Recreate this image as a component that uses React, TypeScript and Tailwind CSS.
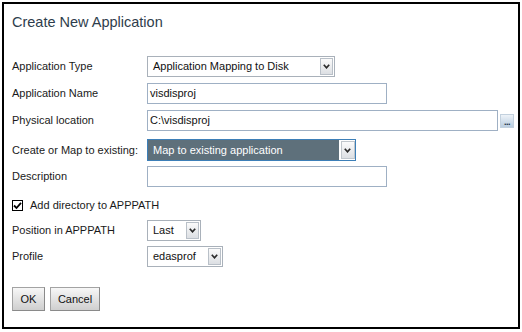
import React from "react";

const Chevron = () => (
  <svg width="7" height="5" viewBox="0 0 7 5">
    <path d="M0.8 0.8 L3.5 3.8 L6.2 0.8" fill="none" stroke="#2b2b2b" strokeWidth="1.7" />
  </svg>
);

const ArrowBox = ({ h = 17 }: { h?: number }) => (
  <div
    className="ml-auto mr-[1px] w-[13px] flex items-center justify-center border border-[#b9c0c8] bg-gradient-to-b from-[#fbfbfb] to-[#dcdfe3]"
    style={{ height: h }}
  >
    <Chevron />
  </div>
);

const Select = ({ w, text }: { w: number; text: string }) => (
  <div
    className="h-[21px] flex items-center border border-[#a9b1ba] bg-white"
    style={{ width: w }}
  >
    <span className="pl-[5px] text-[11px] text-[#111] whitespace-nowrap">{text}</span>
    <ArrowBox />
  </div>
);

const Input = ({ w, text }: { w: number; text?: string }) => (
  <div
    className="h-[21px] flex items-center border border-[#9fb0c4] bg-white"
    style={{ width: w }}
  >
    <span className="pl-[2px] text-[11px] text-[#111]">{text}</span>
  </div>
);

const Label = ({ children }: { children: React.ReactNode }) => (
  <div className="w-[135px] text-[11px] text-[#1a1a1a] whitespace-nowrap">{children}</div>
);

export default function App() {
  return (
    <div
      className="w-[522px] h-[332px] bg-white pt-[2px] pl-[2px]"
      style={{ fontFamily: '"Liberation Sans", Arial, sans-serif' }}
    >
      <div className="w-[518px] h-[327px] border-2 border-black flex flex-col pl-[8px]">
        <div className="mt-[9px] text-[14.5px] leading-[18px] text-[#2e3d4c]">Create New Application</div>

        <div className="mt-[25px] h-[21px] flex items-center">
          <Label>Application Type</Label>
          <Select w={188} text="Application Mapping to Disk" />
        </div>

        <div className="mt-[6px] h-[21px] flex items-center">
          <Label>Application Name</Label>
          <Input w={240} text="visdisproj" />
        </div>

        <div className="mt-[6px] h-[21px] flex items-center">
          <Label>Physical location</Label>
          <Input w={351} text="C:\visdisproj" />
          <div className="ml-[2px] w-[14px] h-[14px] border border-[#c3d1de] bg-gradient-to-b from-[#eef3f8] to-[#b9cde0] flex items-end justify-center">
            <span className="text-[9px] leading-[9px] text-[#1e2e44] font-bold tracking-[-0.5px]">...</span>
          </div>
        </div>

        <div className="mt-[8px] h-[22px] flex items-center">
          <Label>Create or Map to existing:</Label>
          <div className="w-[209px] h-[22px] flex items-center border border-[#3c7fb8] bg-[#5e707b]">
            <span className="pl-[5px] text-[11px] text-white whitespace-nowrap">Map to existing application</span>
            <div className="ml-auto h-full w-[16px] border-l border-white bg-white flex items-center justify-center">
              <div className="w-[14px] h-[18px] border border-[#c0c6cc] bg-gradient-to-b from-[#fbfbfb] to-[#dcdfe3] flex items-center justify-center">
                <Chevron />
              </div>
            </div>
          </div>
        </div>

        <div className="mt-[5px] h-[21px] flex items-center">
          <Label>Description</Label>
          <Input w={240} />
        </div>

        <div className="mt-[12px] h-[12px] flex items-center">
          <div className="w-[11px] h-[11px] border border-black bg-white flex items-center justify-center">
            <svg width="9" height="9" viewBox="0 0 9 9">
              <path d="M1 4.5 L3.5 7 L8 1.8" fill="none" stroke="#000" strokeWidth="1.8" />
            </svg>
          </div>
          <span className="ml-[7px] text-[11px] text-[#1a1a1a]">Add directory to APPPATH</span>
        </div>

        <div className="mt-[9px] h-[21px] flex items-center">
          <Label>Position in APPPATH</Label>
          <Select w={54} text="Last" />
        </div>

        <div className="mt-[5px] h-[21px] flex items-center">
          <Label>Profile</Label>
          <Select w={76} text="edasprof" />
        </div>

        <div className="mt-[20px] flex gap-[5px]">
          <button className="w-[33px] h-[24px] border border-[#a3a3a3] border-b-[#8a8a8a] border-r-[#8a8a8a] bg-gradient-to-b from-[#f7f7f7] to-[#cfcfcf] text-[11px] text-[#111]">
            OK
          </button>
          <button className="w-[50px] h-[24px] border border-[#a3a3a3] border-b-[#8a8a8a] border-r-[#8a8a8a] bg-gradient-to-b from-[#f7f7f7] to-[#cfcfcf] text-[11px] text-[#111]">
            Cancel
          </button>
        </div>
      </div>
    </div>
  );
}
